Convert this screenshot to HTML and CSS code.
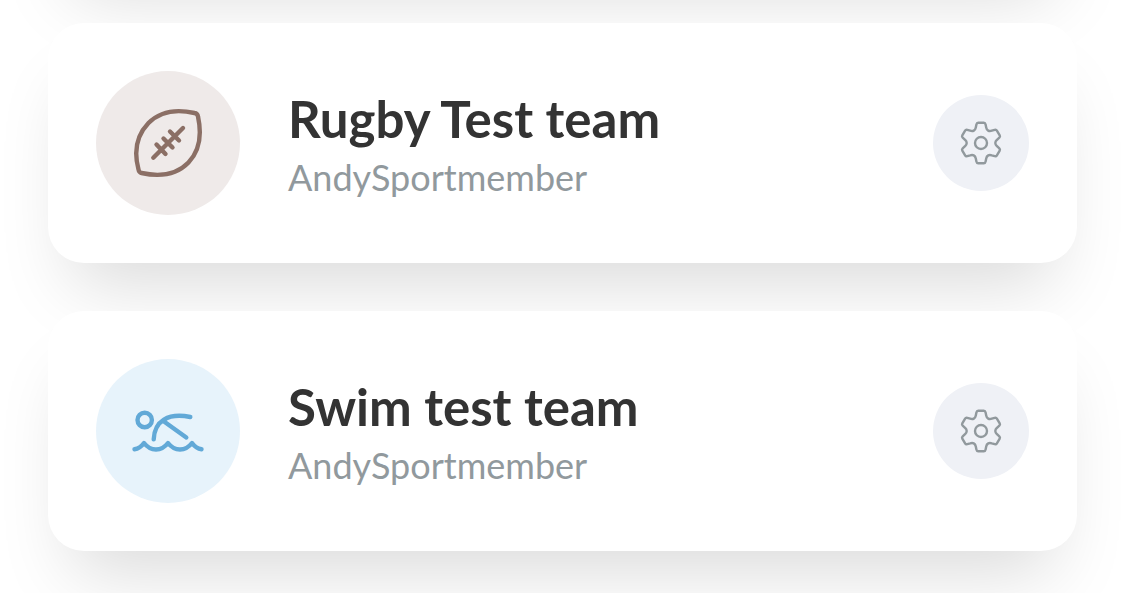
FILE: index.html
```html
<!DOCTYPE html>
<html lang="en">
<head>
    <meta charset="utf-8">
    <meta name="viewport" content="width=device-width, initial-scale=1">
    <title>Teams</title>
    <link rel="stylesheet" href="styles.css">
</head>
<body>
    <!-- gear is used by every card -->
    <svg class="sprite" aria-hidden="true">
        <symbol id="gear" viewBox="-24 -24 48 48">
            <path d="M-2.8-20.3H2.8Q4.2-20.3 4.6-18.5L5.2-15.5Q5.6-13.3 7.2-12.4Q8.7-11.5 10.8-12.3L13.7-13.2Q15.2-13.6 15.9-12.4L18.7-7.6Q19.4-6.4 18.3-5.3L16-3.2Q14.3-1.8 14.3 0Q14.3 1.8 16 3.2L18.3 5.3Q19.4 6.4 18.7 7.6L15.9 12.4Q15.2 13.6 13.7 13.2L10.8 12.3Q8.7 11.5 7.2 12.4Q5.6 13.3 5.2 15.5L4.6 18.5Q4.2 20.3 2.8 20.3H-2.8Q-4.2 20.3-4.6 18.5L-5.2 15.5Q-5.6 13.3-7.2 12.4Q-8.7 11.5-10.8 12.3L-13.7 13.2Q-15.2 13.6-15.9 12.4L-18.7 7.6Q-19.4 6.4-18.3 5.3L-16 3.2Q-14.3 1.8-14.3 0Q-14.3-1.8-16-3.2L-18.3-5.3Q-19.4-6.4-18.7-7.6L-15.9-12.4Q-15.2-13.6-13.7-13.2L-10.8-12.3Q-8.7-11.5-7.2-12.4Q-5.6-13.3-5.2-15.5L-4.6-18.5Q-4.2-20.3-2.8-20.3Z"/>
            <circle r="6"/>
        </symbol>
    </svg>

    <main class="teams">
        <div class="card card-above"></div>

        <article class="card">
            <div class="badge rugby">
                <svg viewBox="-36 -36 72 72" aria-hidden="true">
                    <path d="M-29.5 26.5C-34.5 8-31-8-19.5-20C-8-31.500 9-34 26.500-30Q29.5-29.5 30-26.5C34-8 31.500 8 20.500 19.500C9 31.500-8 34-26.500 30Q-29 29.500-29.5 26.5Z"/>
                    <path d="M-14.7 14.7L15-15M-11.5 1.5L-2.5 11M-4.5-4.5L4.5 4.5M2-11.5L11-2.5"/>
                </svg>
            </div>
            <div class="info">
                <h2>Rugby Test team</h2>
                <p>AndySportmember</p>
            </div>
            <button class="settings" type="button" aria-label="Settings">
                <svg aria-hidden="true"><use href="#gear"/></svg>
            </button>
        </article>

        <article class="card">
            <div class="badge swim">
                <svg viewBox="-36 -36 72 72" aria-hidden="true">
                    <circle cx="-23.3" cy="-11" r="7.2"/>
                    <path d="M-14.3 8.3C-13.5-10 0-18.5 22.3-14M-4-9.5L18.3 6.5"/>
                    <path d="M-33.5 18.3Q-28 17.5-24 12Q-19 18.5-12 18.5Q-5 18.5 0 12Q5 18.5 12 18.5Q19 18.5 24 12Q28 17.5 33.5 18.3"/>
                </svg>
            </div>
            <div class="info">
                <h2>Swim test team</h2>
                <p>AndySportmember</p>
            </div>
            <button class="settings" type="button" aria-label="Settings">
                <svg aria-hidden="true"><use href="#gear"/></svg>
            </button>
        </article>
    </main>
</body>
</html>
```
FILE: styles.css
```css
* {
    box-sizing: border-box;
}

body {
    margin: 0;
    background-color: #fff;
    font-family: Lato, sans-serif;
    overflow: hidden;
}

.sprite {
    display: none;
}

.teams {
    display: flex;
    flex-direction: column;
    gap: 48px;
    padding: 0 48px 48px;
}

.card {
    display: flex;
    align-items: center;
    gap: 48px;
    min-height: 240px;
    padding: 48px;
    background-color: #fff;
    border-radius: 36px;
    box-shadow: 0 44px 72px -24px rgba(0, 0, 0, 0.15);
}

/* scrolled out of view, only its shadow shows */
.card-above {
    margin-top: -265px;
}

.badge {
    display: flex;
    justify-content: center;
    align-items: center;
    flex: none;
    width: 144px;
    height: 144px;
    border-radius: 50%;
}

.badge svg {
    width: 72px;
    height: 72px;
}

svg {
    fill: none;
    stroke: currentColor;
    stroke-width: 4.4;
    stroke-linecap: round;
    stroke-linejoin: round;
}

.rugby {
    background-color: #efeae9;
    color: #8b6f65;
}

.swim {
    background-color: #e7f3fb;
    color: #62a9d7;
}

.info {
    flex: 1;
    min-width: 0;
    padding-top: 4px;
}

.info h2 {
    margin: 0;
    color: #333;
    font-size: 51px;
    line-height: 64px;
    font-weight: bold;
}

.info p {
    margin: 0;
    color: #91999d;
    font-size: 36px;
    line-height: 52px;
}

.settings {
    display: flex;
    justify-content: center;
    align-items: center;
    flex: none;
    width: 96px;
    height: 96px;
    padding: 0;
    border: none;
    border-radius: 50%;
    background-color: #eff1f6;
    color: #91999d;
    cursor: pointer;
}

.settings svg {
    width: 48px;
    height: 48px;
    stroke-width: 2.4;
}
```
